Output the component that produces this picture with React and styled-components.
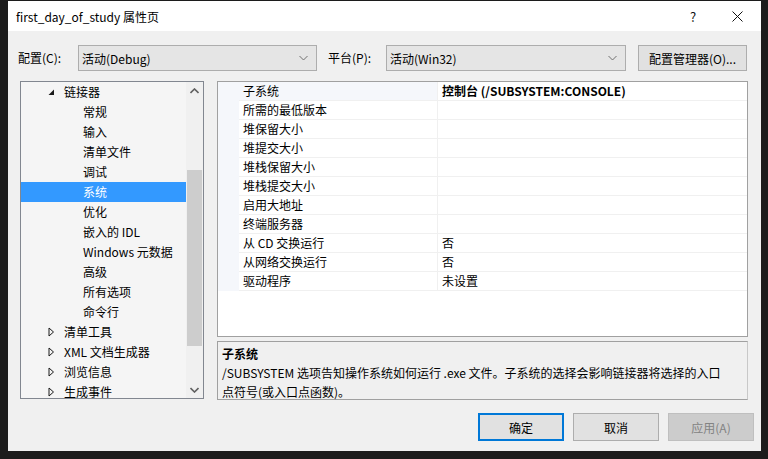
import styled, { createGlobalStyle } from "styled-components";

const GlobalStyle = createGlobalStyle`
  html, body {
    margin: 0;
    padding: 0;
    background: #1c1c1c;
  }
  body {
    font-family: "Microsoft YaHei UI", "Noto Sans CJK SC", "Noto Sans", sans-serif;
    font-size: 12px;
    color: #000;
  }
`;

const treeItems = [
  { label: "链接器", level: 1, expanded: true },
  { label: "常规", level: 2 },
  { label: "输入", level: 2 },
  { label: "清单文件", level: 2 },
  { label: "调试", level: 2 },
  { label: "系统", level: 2, selected: true },
  { label: "优化", level: 2 },
  { label: "嵌入的 IDL", level: 2 },
  { label: "Windows 元数据", level: 2 },
  { label: "高级", level: 2 },
  { label: "所有选项", level: 2 },
  { label: "命令行", level: 2 },
  { label: "清单工具", level: 1 },
  { label: "XML 文档生成器", level: 1 },
  { label: "浏览信息", level: 1 },
  { label: "生成事件", level: 1 },
];

const props = [
  { name: "子系统", value: "控制台 (/SUBSYSTEM:CONSOLE)", bold: true, active: true },
  { name: "所需的最低版本", value: "" },
  { name: "堆保留大小", value: "" },
  { name: "堆提交大小", value: "" },
  { name: "堆栈保留大小", value: "" },
  { name: "堆栈提交大小", value: "" },
  { name: "启用大地址", value: "" },
  { name: "终端服务器", value: "" },
  { name: "从 CD 交换运行", value: "否" },
  { name: "从网络交换运行", value: "否" },
  { name: "驱动程序", value: "未设置" },
];

const Chevron = ({ up }) => (
  <svg width="9" height="6" viewBox="0 0 9 6">
    <path
      d={up ? "M0.5 5 L4.5 1 L8.5 5" : "M0.5 1 L4.5 5 L8.5 1"}
      fill="none"
      stroke={up ? "#606060" : "#707070"}
      strokeWidth={up ? 1.6 : 1}
    />
  </svg>
);

const Expander = ({ expanded }) =>
  expanded ? (
    <svg width="7" height="7" viewBox="0 0 7 7">
      <path d="M6 0.5 L6 6 L0.5 6 Z" fill="#1a1a1a" />
    </svg>
  ) : (
    <svg width="7" height="10" viewBox="0 0 7 10">
      <path d="M1 1 L5.5 5 L1 9 Z" fill="none" stroke="#1a1a1a" strokeWidth="1" />
    </svg>
  );

export default function App() {
  return (
    <>
      <GlobalStyle />
      <Screen>
        <Window>
          <TitleBar>
            <Title>first_day_of_study 属性页</Title>
            <TitleButton>?</TitleButton>
            <TitleButton>
              <svg width="11" height="11" viewBox="0 0 11 11">
                <path d="M0.5 0.5 L10.5 10.5 M10.5 0.5 L0.5 10.5" stroke="#111" strokeWidth="1" />
              </svg>
            </TitleButton>
          </TitleBar>

          <Toolbar>
            <Label $width={60}>配置(C):</Label>
            <Combo $width={239}>
              <span>活动(Debug)</span>
              <Chevron />
            </Combo>
            <Label $width={58} style={{ marginLeft: 11 }}>平台(P):</Label>
            <Combo $width={240}>
              <span>活动(Win32)</span>
              <Chevron />
            </Combo>
            <ManagerButton>配置管理器(O)...</ManagerButton>
          </Toolbar>

          <Main>
            <Tree>
              <TreeList>
                {treeItems.map((item) => (
                  <TreeRow key={item.label} $level={item.level} $selected={item.selected}>
                    {item.level === 1 && (
                      <ExpanderBox>
                        <Expander expanded={item.expanded} />
                      </ExpanderBox>
                    )}
                    {item.label}
                  </TreeRow>
                ))}
              </TreeList>
              <ScrollBar>
                <ScrollArrow>
                  <Chevron up />
                </ScrollArrow>
                <ScrollTrack>
                  <ScrollThumb />
                </ScrollTrack>
                <ScrollArrow>
                  <svg width="9" height="6" viewBox="0 0 9 6">
                    <path d="M0.5 1 L4.5 5 L8.5 1" fill="none" stroke="#606060" strokeWidth="1.6" />
                  </svg>
                </ScrollArrow>
              </ScrollBar>
            </Tree>

            <RightColumn>
              <Grid>
                {props.map((p) => (
                  <GridRow key={p.name}>
                    <Gutter />
                    <NameCell $active={p.active}>{p.name}</NameCell>
                    <ValueCell $bold={p.bold}>{p.value}</ValueCell>
                  </GridRow>
                ))}
              </Grid>
              <Description>
                <DescTitle>子系统</DescTitle>
                <DescText>
                  /SUBSYSTEM 选项告知操作系统如何运行 .exe 文件。子系统的选择会影响链接器将选择的入口
                  <br />
                  点符号(或入口点函数)。
                </DescText>
              </Description>
            </RightColumn>
          </Main>

          <Footer>
            <DialogButton $primary>确定</DialogButton>
            <DialogButton>取消</DialogButton>
            <DialogButton $disabled>应用(A)</DialogButton>
          </Footer>
        </Window>
      </Screen>
    </>
  );
}

const Screen = styled.div`
  height: 459px;
  padding: 1px 0 0 8px;
  box-sizing: border-box;
`;

const Window = styled.div`
  width: 753px;
  height: 450px;
  background: #f0f0f0;
  display: flex;
  flex-direction: column;
`;

const TitleBar = styled.div`
  height: 30px;
  background: #fff;
  display: flex;
  align-items: center;
  padding: 0 2px 0 8px;
`;

const Title = styled.div`
  flex: 1;
  font-size: 12px;
  color: #000;
`;

const TitleButton = styled.div`
  width: 44px;
  height: 30px;
  display: flex;
  align-items: center;
  justify-content: center;
  font-size: 13px;
  color: #111;
`;

const Toolbar = styled.div`
  margin-top: 14px;
  height: 26px;
  padding-left: 10px;
  display: flex;
  align-items: center;
`;

const Label = styled.div`
  width: ${(p) => p.$width}px;
  flex-shrink: 0;
  line-height: 26px;
`;

const Combo = styled.div`
  width: ${(p) => p.$width}px;
  height: 26px;
  box-sizing: border-box;
  border: 1px solid #adadad;
  background: #e5e5e5;
  display: flex;
  align-items: center;
  justify-content: space-between;
  padding: 0 8px 0 3px;
`;

const ManagerButton = styled.div`
  margin-left: 12px;
  width: 109px;
  height: 26px;
  box-sizing: border-box;
  border: 1px solid #adadad;
  background: #e1e1e1;
  display: flex;
  align-items: center;
  justify-content: center;
`;

const Main = styled.div`
  margin-top: 10px;
  padding-left: 12px;
  display: flex;
  align-items: flex-start;
`;

const Tree = styled.div`
  width: 184px;
  height: 318px;
  box-sizing: border-box;
  border: 1px solid #828790;
  background: #f5f5f5;
  display: flex;
  overflow: hidden;
`;

const TreeList = styled.div`
  flex: 1;
  overflow: hidden;
`;

const TreeRow = styled.div`
  height: 20px;
  line-height: 20px;
  display: flex;
  align-items: center;
  white-space: nowrap;
  padding-left: ${(p) => (p.$level === 1 ? 27 : 62)}px;
  background: ${(p) => (p.$selected ? "#3399ff" : "transparent")};
  color: ${(p) => (p.$selected ? "#fff" : "#000")};
`;

const ExpanderBox = styled.span`
  width: 16px;
  display: flex;
  align-items: center;
`;

const ScrollBar = styled.div`
  width: 17px;
  background: #f0f0f0;
  display: flex;
  flex-direction: column;
`;

const ScrollArrow = styled.div`
  height: 17px;
  display: flex;
  align-items: center;
  justify-content: center;
`;

const ScrollTrack = styled.div`
  flex: 1;
  padding: 71px 1px 0 1px;
`;

const ScrollThumb = styled.div`
  height: 176px;
  background: #cdcdcd;
`;

const RightColumn = styled.div`
  margin-left: 13px;
  width: 531px;
  display: flex;
  flex-direction: column;
  gap: 4px;
`;

const Grid = styled.div`
  height: 256px;
  box-sizing: border-box;
  border: 1px solid #a0a0a0;
  background: #fff;
`;

const GridRow = styled.div`
  display: flex;
  height: 19px;
`;

const Gutter = styled.div`
  width: 21px;
  background: #f5f7fb;
`;

const NameCell = styled.div`
  width: 199px;
  box-sizing: border-box;
  padding-left: 4px;
  line-height: 18px;
  border-bottom: 1px solid #f0f0f0;
  border-right: 1px solid #f0f0f0;
  background: ${(p) => (p.$active ? "#f5f7fb" : "#fff")};
  white-space: nowrap;
`;

const ValueCell = styled.div`
  flex: 1;
  padding-left: 4px;
  line-height: 18px;
  border-bottom: 1px solid #f0f0f0;
  font-weight: ${(p) => (p.$bold ? 700 : 400)};
  white-space: nowrap;
`;

const Description = styled.div`
  height: 59px;
  box-sizing: border-box;
  border: 1px solid #a0a0a0;
  border-right-color: #c8c8c8;
  padding: 2px 4px 0 4px;
  background: #f0f0f0;
`;

const DescTitle = styled.div`
  font-weight: 700;
  line-height: 19px;
`;

const DescText = styled.div`
  line-height: 19px;
  white-space: nowrap;
`;

const Footer = styled.div`
  margin-top: 13px;
  padding-right: 7px;
  display: flex;
  justify-content: flex-end;
  gap: 9px;
`;

const DialogButton = styled.div`
  width: 86px;
  height: 28px;
  box-sizing: border-box;
  display: flex;
  align-items: center;
  justify-content: center;
  background: ${(p) => (p.$disabled ? "#cccccc" : "#e1e1e1")};
  border: ${(p) => (p.$primary ? "2px solid #0078d7" : p.$disabled ? "1px solid #bfbfbf" : "1px solid #adadad")};
  color: ${(p) => (p.$disabled ? "#838383" : "#000")};
`;
